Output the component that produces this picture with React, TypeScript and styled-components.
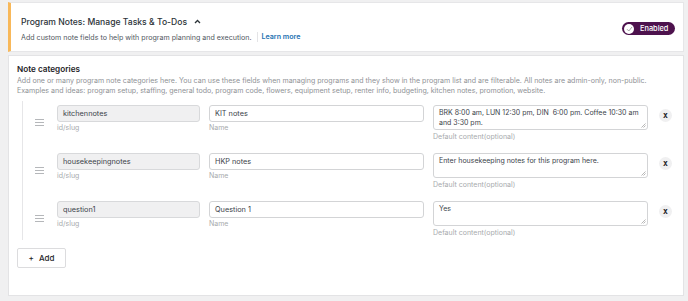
import React from "react";
import styled, { createGlobalStyle } from "styled-components";

const GlobalStyle = createGlobalStyle`
  html, body { margin: 0; padding: 0; }
  body {
    background: #f0f0f1;
    font-family: Inter, "Noto Sans", sans-serif;
    color: #3c434a;
  }
  * { box-sizing: border-box; }
`;

const Page = styled.div`
  width: 688px;
  height: 301px;
  padding: 2px 4px 0 8px;
  display: flex;
  flex-direction: column;
  gap: 3px;
  overflow: hidden;
`;

const HeaderCard = styled.section`
  background: #fff;
  border: 1px solid #e6e6e8;
  border-left: 3px solid #f8b85a;
  height: 50px;
  padding: 14px 8px 0 10px;
  display: flex;
  justify-content: space-between;
`;

const HeaderText = styled.div`
  display: flex;
  flex-direction: column;
  gap: 5px;
`;

const Title = styled.div`
  font-size: 8.6px;
  font-weight: 500;
  color: #2c3338;
  display: flex;
  align-items: center;
  gap: 7px;
`;

const Caret = styled.span`
  display: flex;
  transform: translateY(-1px);
`;

const Subtitle = styled.div`
  font-size: 7.1px;
  color: #50575e;
  display: flex;
  align-items: center;
`;

const LearnMore = styled.a`
  color: #2271b1;
  font-weight: 600;
  text-decoration: none;
  margin-left: 6px;
  padding-left: 3px;
  border-left: 1px solid #e4e4e6;
  line-height: 10px;
`;

const Toggle = styled.div`
  margin-top: 5px;
  width: 53px;
  height: 13px;
  border-radius: 7px;
  background: #4d124d;
  display: flex;
  align-items: center;
  padding: 0 2px;
  gap: 6px;
  color: #fff;
  font-size: 7.4px;
  font-weight: 500;
`;

const Knob = styled.span`
  width: 10px;
  height: 10px;
  border-radius: 50%;
  background: #fff;
  display: flex;
  align-items: center;
  justify-content: center;
`;

const Card = styled.section`
  background: #fff;
  border: 1px solid #e3e3e5;
  height: 241px;
  padding: 7px 8px 0 8px;
`;

const Heading = styled.h2`
  margin: 0;
  font-size: 8.2px;
  font-weight: 600;
  color: #1d2327;
  line-height: 13px;
`;

const Description = styled.p`
  margin: 0;
  font-size: 7.05px;
  line-height: 10px;
  color: #8f9296;
`;

const List = styled.div`
  margin: 5px 0 0 5px;
  border-left: 1px solid #e6e6e8;
  padding-top: 4px;
  padding-bottom: 2px;
  display: flex;
  flex-direction: column;
  gap: 11px;
`;

const Row = styled.div`
  display: grid;
  grid-template-columns: 34px 143px 9px 215px 9px 215px 34px;
  align-items: start;
`;

const Handle = styled.div`
  padding-top: 5px;
  padding-left: 12px;
`;

const Field = styled.div`
  display: flex;
  flex-direction: column;
`;

const Input = styled.div<{ $readonly?: boolean }>`
  height: 17px;
  border: 1px solid ${(p) => (p.$readonly ? "#d8d9db" : "#d3d4d6")};
  background: ${(p) => (p.$readonly ? "#f0f0f1" : "#fff")};
  border-radius: 3px;
  padding: 0 5px;
  font-size: 7.3px;
  color: #3c434a;
  display: flex;
  align-items: center;
`;

const TextArea = styled.div`
  position: relative;
  height: 25px;
  border: 1px solid #d3d4d6;
  border-radius: 3px;
  padding: 2px 5px;
  font-size: 7px;
  line-height: 9.5px;
  color: #3c434a;
  white-space: pre-wrap;
`;

const Grip = styled.svg`
  position: absolute;
  right: 1px;
  bottom: 1px;
`;

const Label = styled.span`
  font-size: 7px;
  color: #a7aaad;
  margin-top: 1px;
  line-height: 10px;
`;

const HintLabel = styled(Label)`
  margin-top: 2px;
`;

const Spacer = styled.div``;

const RemoveButton = styled.button`
  margin: 4px 0 0 11px;
  width: 13px;
  height: 13px;
  border-radius: 50%;
  border: none;
  background: #f0f0f1;
  color: #1d2327;
  font-size: 8px;
  font-weight: 700;
  font-family: "DejaVu Sans Mono", monospace;
  padding: 0;
  display: flex;
  align-items: center;
  justify-content: center;
  line-height: 1;
`;

const AddButton = styled.button`
  margin-top: 8px;
  width: 49px;
  height: 20px;
  border: 1px solid #dcdcde;
  border-radius: 2px;
  background: #fff;
  font-family: Inter, sans-serif;
  font-size: 8px;
  font-weight: 500;
  color: #1d2327;
  display: flex;
  align-items: center;
  justify-content: center;
  gap: 5px;
  padding: 0;
`;

type Note = { slug: string; name: string; content: string };

const notes: Note[] = [
  {
    slug: "kitchennotes",
    name: "KIT notes",
    content: "BRK 8:00 am, LUN 12:30 pm, DIN  6:00 pm. Coffee 10:30 am and 3:30 pm.",
  },
  {
    slug: "housekeepingnotes",
    name: "HKP notes",
    content: "Enter housekeeping notes for this program here.",
  },
  { slug: "question1", name: "Question 1", content: "Yes" },
];

const HandleIcon = () => (
  <svg width="9" height="7" viewBox="0 0 9 7">
    <path d="M0 0.5h9M0 3.5h9M0 6.5h9" stroke="#b5b7ba" strokeWidth="1" />
  </svg>
);

export default function App() {
  return (
    <>
      <GlobalStyle />
      <Page>
        <HeaderCard>
          <HeaderText>
            <Title>
              Program Notes: Manage Tasks &amp; To-Dos
              <Caret>
                <svg width="7" height="5" viewBox="0 0 7 5">
                  <path d="M1 4L3.5 1.5L6 4" stroke="#2c3338" strokeWidth="1.3" fill="none" />
                </svg>
              </Caret>
            </Title>
            <Subtitle>
              Add custom note fields to help with program planning and execution.
              <LearnMore href="#">Learn more</LearnMore>
            </Subtitle>
          </HeaderText>
          <Toggle>
            <Knob>
              <svg width="7" height="6" viewBox="0 0 7 6">
                <path d="M1 3.2L2.8 5L6 1" stroke="#9a9a9a" strokeWidth="0.9" fill="none" />
              </svg>
            </Knob>
            Enabled
          </Toggle>
        </HeaderCard>
        <Card>
          <Heading>Note categories</Heading>
          <Description>
            Add one or many program note categories here. You can use these fields when managing programs and they show in the program list and are filterable. All notes are admin-only, non-public.
            <br />
            Examples and ideas: program setup, staffing, general todo, program code, flowers, equipment setup, renter info, budgeting, kitchen notes, promotion, website.
          </Description>
          <List>
            {notes.map((n) => (
              <Row key={n.slug}>
                <Handle>
                  <HandleIcon />
                </Handle>
                <Field>
                  <Input $readonly>{n.slug}</Input>
                  <Label>id/slug</Label>
                </Field>
                <Spacer />
                <Field>
                  <Input>{n.name}</Input>
                  <Label>Name</Label>
                </Field>
                <Spacer />
                <Field>
                  <TextArea>
                    {n.content}
                    <Grip width="5" height="5" viewBox="0 0 5 5">
                      <path d="M4.5 0.5L0.5 4.5M4.5 2.5L2.5 4.5" stroke="#9a9a9a" strokeWidth="0.7" />
                    </Grip>
                  </TextArea>
                  <HintLabel>Default content(optional)</HintLabel>
                </Field>
                <RemoveButton>x</RemoveButton>
              </Row>
            ))}
          </List>
          <AddButton>
            <span>+</span>
            <span>Add</span>
          </AddButton>
        </Card>
      </Page>
    </>
  );
}
